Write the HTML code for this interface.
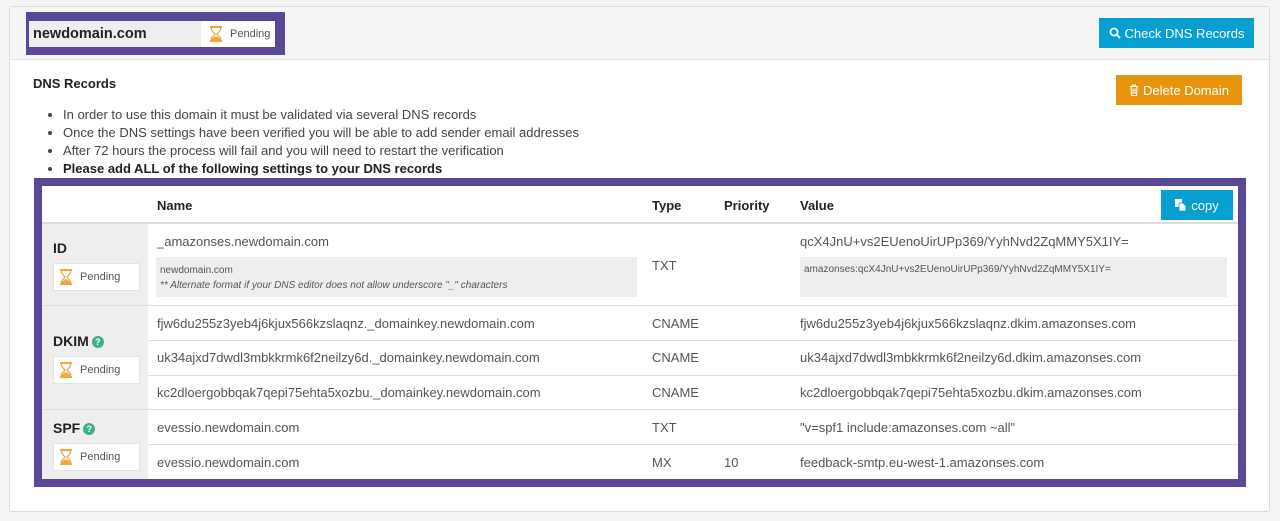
<!DOCTYPE html>
<html><head><style>
*{box-sizing:border-box;margin:0;padding:0}
body{width:1280px;height:521px;background:#f4f4f4;font-family:"Liberation Sans",sans-serif;color:#333;position:relative;overflow:hidden}
.abs{position:absolute}
.panel{left:9px;top:6px;width:1261px;height:506px;background:#fff;border:1px solid #ddd;border-radius:3px}
.head{left:10px;top:7px;width:1259px;height:53px;background:#f5f5f5;border-bottom:1px solid #e3e3e3}
.pend{background:#fff;font-size:11px;color:#555;display:flex;align-items:center}
.hg{display:inline-block;width:12px;height:16px;margin-right:8px}
.btn{color:#fff;font-size:13px;display:flex;align-items:center;justify-content:center}
.t{font-size:13px;color:#555;white-space:nowrap}
.row{position:absolute;left:148px;width:1090px;border-top:1px solid #ddd}
.q{display:inline-block;width:12px;height:12px;border-radius:50%;background:#3bb08f;color:#fff;font-size:9px;font-weight:bold;text-align:center;line-height:12px;vertical-align:1px;margin-left:3px}
ul li{font-size:13px;line-height:18px;color:#444}
</style></head><body>
<svg width="0" height="0" style="position:absolute"><defs><symbol id="hg" viewBox="0 0 12 16"><rect x="0" y="0" width="12" height="2" fill="#f0a742"/><rect x="0" y="14" width="12" height="2" fill="#f0a742"/><path d="M1.5 2 L1.5 4 L5 8 L1.5 12 L1.5 14 M10.5 2 L10.5 4 L7 8 L10.5 12 L10.5 14" fill="none" stroke="#f0a742" stroke-width="1.3"/><path d="M2 14 L2 12.5 L6 10 L10 12.5 L10 14Z" fill="#f0a742"/></symbol></defs></svg>
<div class="abs panel"></div>
<div class="abs head"></div>
<div class="abs" style="left:26px;top:12px;width:259px;height:43px;background:#5a4896"></div>
<div class="abs" style="left:29px;top:21px;width:172px;height:26px;background:#eee;font-weight:bold;font-size:14.5px;padding:5px 0 0 4px;color:#222">newdomain.com</div>
<div class="abs pend" style="left:201px;top:21px;width:74px;height:26px;padding-left:9px"><svg class="hg"><use href="#hg"/></svg>Pending</div>
<div class="abs btn" style="left:1099px;top:18px;width:155px;height:30px;background:#069fd0"><svg width="12" height="12" viewBox="0 0 12 12" style="margin-right:4px"><circle cx="5" cy="5" r="3.6" fill="none" stroke="#fff" stroke-width="1.8"/><path d="M7.6 7.6 L11 11" stroke="#fff" stroke-width="2"/></svg>Check DNS Records</div>
<div class="abs btn" style="left:1116px;top:75px;width:126px;height:30px;background:#e8940f"><svg width="10" height="12" viewBox="0 0 10 12" style="margin-right:4px"><path d="M1 2.5H9M3.5 2.5V1H6.5V2.5M2 2.5L2.5 11.5H7.5L8 2.5M4 4.5V10M6 4.5V10" fill="none" stroke="#fff" stroke-width="1.1"/></svg>Delete Domain</div>
<div class="abs" style="left:33px;top:76px;font-weight:bold;font-size:13px;color:#222">DNS Records</div>
<ul class="abs" style="left:63px;top:106px;width:600px">
<li>In order to use this domain it must be validated via several DNS records</li>
<li>Once the DNS settings have been verified you will be able to add sender email addresses</li>
<li>After 72 hours the process will fail and you will need to restart the verification</li>
<li><b style="color:#222">Please add ALL of the following settings to your DNS records</b></li>
</ul>
<div class="abs" style="left:34px;top:178px;width:1212px;height:309px;background:#5a4896"></div>
<div class="abs" style="left:42px;top:186px;width:1196px;height:293px;background:#fff"></div>
<div class="abs" style="left:42px;top:222px;width:106px;height:257px;background:#eee"></div>
<div class="abs" style="left:42px;top:222px;width:1196px;border-top:2px solid #ddd"></div>
<div class="abs" style="left:42px;top:305px;width:1196px;border-top:1px solid #ddd"></div>
<div class="abs" style="left:42px;top:409px;width:1196px;border-top:1px solid #ddd"></div>
<div class="row" style="top:340px"></div><div class="row" style="top:375px"></div><div class="row" style="top:444px"></div>
<div class="abs t" style="left:157px;top:198px;font-weight:bold;color:#222">Name</div>
<div class="abs t" style="left:652px;top:198px;font-weight:bold;color:#222">Type</div>
<div class="abs t" style="left:724px;top:198px;font-weight:bold;color:#222">Priority</div>
<div class="abs t" style="left:800px;top:198px;font-weight:bold;color:#222">Value</div>
<div class="abs btn" style="left:1161px;top:190px;width:72px;height:30px;background:#069fd0"><svg width="11" height="12" viewBox="0 0 11 12" style="margin-right:5px"><rect x="0" y="0" width="7" height="8" fill="#fff"/><path d="M4 4H8L11 7V12H4Z" fill="#fff" stroke="#069fd0" stroke-width="0.8"/></svg>copy</div>
<div class="abs" style="left:53px;top:240px;font-weight:bold;font-size:14px;color:#222">ID</div>
<div class="abs pend" style="left:53px;top:263px;width:87px;height:28px;padding-left:6px;border:1px solid #e3e3e3"><svg class="hg"><use href="#hg"/></svg>Pending</div>
<div class="abs" style="left:53px;top:333px;font-weight:bold;font-size:14px;color:#222">DKIM<span class="q">?</span></div>
<div class="abs pend" style="left:53px;top:356px;width:87px;height:28px;padding-left:6px;border:1px solid #e3e3e3"><svg class="hg"><use href="#hg"/></svg>Pending</div>
<div class="abs" style="left:53px;top:420px;font-weight:bold;font-size:14px;color:#222">SPF<span class="q">?</span></div>
<div class="abs pend" style="left:53px;top:443px;width:87px;height:28px;padding-left:6px;border:1px solid #e3e3e3"><svg class="hg"><use href="#hg"/></svg>Pending</div>
<div class="abs t" style="left:157px;top:234px">_amazonses.newdomain.com</div>
<div class="abs" style="left:156px;top:257px;width:481px;height:40px;background:#eee;font-size:10px;color:#555;padding:6px 0 0 4px;line-height:15px">newdomain.com<br><i>** Alternate format if your DNS editor does not allow underscore "_" characters</i></div>
<div class="abs t" style="left:652px;top:258px">TXT</div>
<div class="abs t" style="left:800px;top:234px">qcX4JnU+vs2EUenoUirUPp369/YyhNvd2ZqMMY5X1IY=</div>
<div class="abs" style="left:800px;top:257px;width:427px;height:40px;background:#eee;font-size:10px;color:#555;padding:7px 0 0 4px">amazonses:qcX4JnU+vs2EUenoUirUPp369/YyhNvd2ZqMMY5X1IY=</div>
<div class="abs t" style="left:157px;top:316px">fjw6du255z3yeb4j6kjux566kzslaqnz._domainkey.newdomain.com</div>
<div class="abs t" style="left:652px;top:316px">CNAME</div>
<div class="abs t" style="left:800px;top:316px">fjw6du255z3yeb4j6kjux566kzslaqnz.dkim.amazonses.com</div>
<div class="abs t" style="left:157px;top:350px">uk34ajxd7dwdl3mbkkrmk6f2neilzy6d._domainkey.newdomain.com</div>
<div class="abs t" style="left:652px;top:350px">CNAME</div>
<div class="abs t" style="left:800px;top:350px">uk34ajxd7dwdl3mbkkrmk6f2neilzy6d.dkim.amazonses.com</div>
<div class="abs t" style="left:157px;top:385px">kc2dloergobbqak7qepi75ehta5xozbu._domainkey.newdomain.com</div>
<div class="abs t" style="left:652px;top:385px">CNAME</div>
<div class="abs t" style="left:800px;top:385px">kc2dloergobbqak7qepi75ehta5xozbu.dkim.amazonses.com</div>
<div class="abs t" style="left:157px;top:420px">evessio.newdomain.com</div>
<div class="abs t" style="left:652px;top:420px">TXT</div>
<div class="abs t" style="left:800px;top:420px">"v=spf1 include:amazonses.com ~all"</div>
<div class="abs t" style="left:157px;top:455px">evessio.newdomain.com</div>
<div class="abs t" style="left:652px;top:455px">MX</div>
<div class="abs t" style="left:724px;top:455px">10</div>
<div class="abs t" style="left:800px;top:455px">feedback-smtp.eu-west-1.amazonses.com</div>
</body></html>
